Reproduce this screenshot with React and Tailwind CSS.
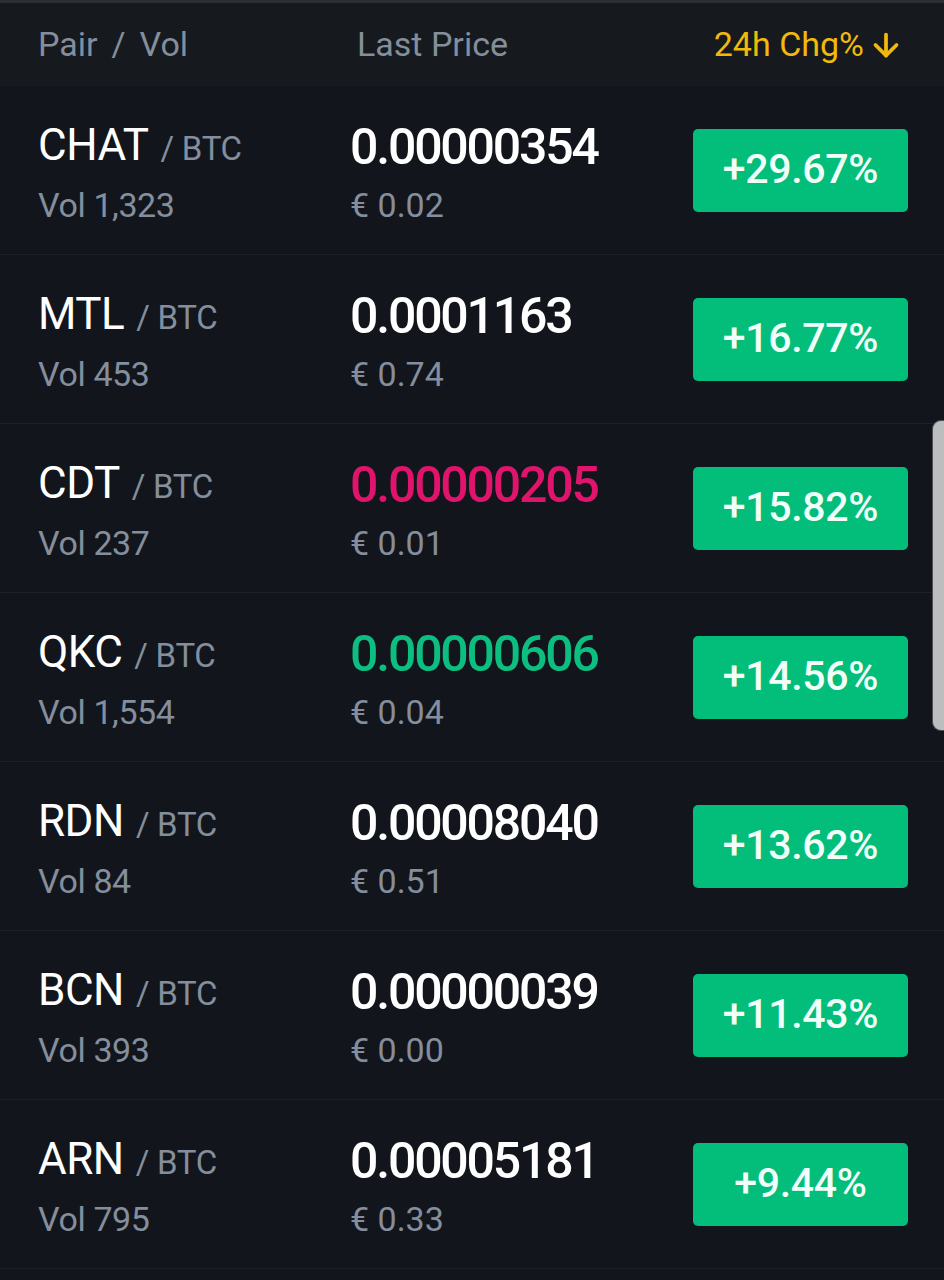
import React from "react";
import { ArrowDown } from "lucide-react";

const rows = [
  { pair: "CHAT", vol: "1,323", price: "0.00000354", fiat: "0.02", chg: "+29.67%", tone: "white" },
  { pair: "MTL", vol: "453", price: "0.0001163", fiat: "0.74", chg: "+16.77%", tone: "white" },
  { pair: "CDT", vol: "237", price: "0.00000205", fiat: "0.01", chg: "+15.82%", tone: "down" },
  { pair: "QKC", vol: "1,554", price: "0.00000606", fiat: "0.04", chg: "+14.56%", tone: "up" },
  { pair: "RDN", vol: "84", price: "0.00008040", fiat: "0.51", chg: "+13.62%", tone: "white" },
  { pair: "BCN", vol: "393", price: "0.00000039", fiat: "0.00", chg: "+11.43%", tone: "white" },
  { pair: "ARN", vol: "795", price: "0.00005181", fiat: "0.33", chg: "+9.44%", tone: "white" },
];

const priceColor = {
  white: "text-white",
  down: "text-[#e0146c]",
  up: "text-[#0cbf80]",
};

const Row = ({ r }) => {
  return (
    <div className="flex items-center h-[169px] border-b border-[#1e2228] pl-[38px] pr-[36px]">
      {/* pair + vol */}
      <div className="w-[312px] flex flex-col mt-[4px]">
        <div className="flex items-baseline">
          <span className="text-[44px] leading-[52px] text-white tracking-[-0.5px]">{r.pair}</span>
          <span className="text-[33px] text-[#848e9c] ml-[12px] tracking-[-0.3px]">/ BTC</span>
        </div>
        <span className="text-[34px] leading-[40px] mt-[12px] text-[#848e9c] tracking-[-0.4px]">Vol {r.vol}</span>
      </div>
      {/* price */}
      <div className="flex-1 flex flex-col mt-[4px]">
        <span className={`text-[50px] leading-[56px] font-medium tracking-[-2.2px] ${priceColor[r.tone]}`}>{r.price}</span>
        <span className="text-[34px] leading-[40px] mt-[10px] text-[#848e9c]">€ {r.fiat}</span>
      </div>
      {/* change */}
      <div className="w-[215px] h-[83px] rounded-[5px] bg-[#03bd7a] flex items-center justify-center">
        <span className="text-[41px] text-[#f2fff8] font-medium tracking-[-0.3px]">{r.chg}</span>
      </div>
    </div>
  );
};

export default function App() {
  return (
    <div className="relative w-[944px] h-[1280px] bg-[#12161c] overflow-hidden font-['Roboto',sans-serif]">
      <div className="h-[3px] bg-[#2b2f36]"></div>
      {/* header */}
      <div className="h-[83px] bg-[#161a1f] flex items-center pl-[38px] pr-[40px] text-[34px] text-[#848e9c]">
        <div className="w-[319px] flex gap-[14px]">
          <span>Pair</span>
          <span>/</span>
          <span>Vol</span>
        </div>
        <div className="flex-1">Last Price</div>
        <div className="flex items-center text-[#f0b90b]">
          <span>24h Chg%</span>
          <ArrowDown size={36} strokeWidth={2.5} className="ml-[4px]" />
        </div>
      </div>
      {/* list */}
      <div className="flex flex-col">
        {rows.map((r) => (
          <Row key={r.pair} r={r} />
        ))}
      </div>
      {/* scrollbar */}
      <div className="absolute right-0 top-[420px] w-[12px] h-[311px] bg-[#bcbdbf] rounded-l-[9px] border border-r-0 border-[#4a4d52]"></div>
    </div>
  );
}
